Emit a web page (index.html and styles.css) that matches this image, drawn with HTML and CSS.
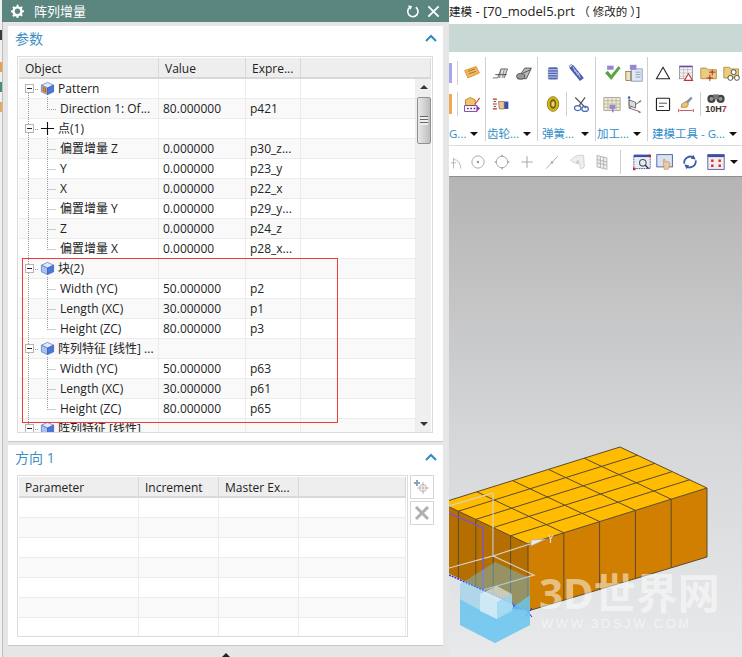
FILE: index.html
```html
<!DOCTYPE html>
<html lang="zh">
<head>
<meta charset="utf-8">
<title>阵列增量</title>
<link rel="stylesheet" href="styles.css">
</head>
<body>
<svg class="defs" width="0" height="0">
  <defs>
    <symbol id="cube" viewBox="0 0 16 16">
      <path d="M1.5 4.5 8 1.5l6.5 3-6.5 3z" fill="#e4ebfa" stroke="#5a78c8" stroke-width=".8"/>
      <path d="M1.5 4.5 8 7.5v7l-6.500-3z" fill="#a9c2f0" stroke="#5a78c8" stroke-width=".8"/>
      <path d="M14.500 4.500 8 7.500v7l6.500-3z" fill="#4a78dc" stroke="#3c5cb0" stroke-width=".8"/>
    </symbol>
  </defs>
</svg>

<div class="behind">
  <span class="bit bit-a"></span><span class="bit bit-b"></span><span class="bit bit-c"></span><span class="bit bit-d"></span>
</div>

<main class="app">
  <header class="app-title"><span class="cjk">建模</span> - [70_model5.prt <span class="cjk">（ 修改的 ）</span>]</header>
  <div class="band"></div>
  <section class="ribbon">
    <div class="group g0">
      <div class="tool-row"><span class="sliver sl-p"></span><span class="sep"></span>
        <svg class="ic" viewBox="0 0 22 22"><path d="M2 8 16 3l4 8-14 6z" fill="#f4b860" stroke="#d98a20"/><path d="M6 9l9-3M7 12l9-3" stroke="#8a6a30"/></svg>
      </div>
      <div class="tool-row"><span class="sliver sl-o"></span><span class="sep"></span>
        <svg class="ic" viewBox="0 0 22 22"><path d="M3 6l6-3 6 3v6l-6 3-6-3z" fill="#f2c46a" stroke="#b07a20"/><path d="M14 11 20 3l1 1-6 8z" fill="#d04a30"/><rect x="2" y="13" width="15" height="7" fill="#fff" stroke="#5a2a90"/><path d="M5 16.500h2M9 16.500h2M13 16.500h2" stroke="#5a2a90" stroke-width="2"/><path d="m17 13 4 3.500-4 3.500z" fill="#a030b0"/></svg>
      </div>
      <div class="label"><span class="label-text">G...</span><i class="caret"></i></div>
    </div>
    <div class="group g1">
      <div class="tool-row">
        <svg class="ic" viewBox="0 0 22 22"><path d="M1 17h6l4-11h8l-4 11" fill="#ddd" stroke="#555"/><path d="M4 13h14" stroke="#333"/><path d="M11 6l-2 11M15 6l-2 11" stroke="#777"/></svg>
        <svg class="ic" viewBox="0 0 22 22"><path d="M3 18 12 5h8l-6 13z" fill="#bbb" stroke="#444"/><ellipse cx="7" cy="15" rx="5" ry="3.500" fill="#999" stroke="#444"/><path d="M10 11l9-4" stroke="#444"/></svg>
      </div>
      <div class="tool-row">
        <svg class="ic" viewBox="0 0 22 22"><path d="M1 5h5M1 11h5M1 17h5" stroke="#b03030" stroke-width="1.500"/><path d="M2 8h3M2 14h3" stroke="#333"/><path d="M8 8h7v9H9z" fill="#e8c59a" stroke="#9a7a50"/><rect x="15" y="8" width="5" height="9" fill="#3a4fa8"/></svg>
      </div>
      <div class="label"><span class="label-text">齿轮...</span><i class="caret"></i></div>
    </div>
    <div class="group g2">
      <div class="tool-row r-gap2">
        <svg class="ic" viewBox="0 0 22 22"><rect x="5" y="4" width="12" height="15" rx="2" fill="#5566b0"/><path d="M4 7h14M4 10h14M4 13h14M4 16h14" stroke="#c8d0ee" stroke-width="1.200"/></svg>
        <svg class="ic" viewBox="0 0 22 22"><path d="M4 3 17 19" stroke="#4a5aae" stroke-width="6"/><path d="M6 3l3 7M9 7l3 7M12 10l3 7" stroke="#c8d4f0" stroke-width="1.200"/><circle cx="4" cy="3" r="2" fill="none" stroke="#4a6ab0"/></svg>
      </div>
      <div class="tool-row">
        <svg class="ic" viewBox="0 0 22 22"><ellipse cx="11" cy="11" rx="7" ry="9" fill="#d4b818" stroke="#8a7410"/><ellipse cx="11" cy="11" rx="4" ry="6" fill="#7a6a10"/><ellipse cx="11" cy="11" rx="2" ry="3.500" fill="#e6d870"/></svg>
        <span class="sep sep-tight"></span>
        <svg class="ic" viewBox="0 0 22 22"><path d="M4 3 17 16M16 3 8 14" stroke="#555" stroke-width="1.500"/><ellipse cx="7" cy="16" rx="4" ry="3" fill="none" stroke="#4a6ab8" stroke-width="1.500"/><ellipse cx="16" cy="17" rx="4" ry="3" fill="none" stroke="#4a6ab8" stroke-width="1.500"/></svg>
      </div>
      <div class="label"><span class="label-text">弹簧...</span><i class="caret"></i></div>
    </div>
    <div class="group g3">
      <div class="tool-row">
        <svg class="ic" viewBox="0 0 22 22"><path d="M5 2h8v5H5z" fill="#9a84d4"/><path d="M3 11l3-2 4 5 9-11 2 2-11 14z" fill="#56a838" stroke="#3a8028" stroke-width=".6"/></svg>
        <svg class="ic" viewBox="0 0 22 22"><rect x="8" y="6" width="13" height="15" fill="#dfe8f4" stroke="#7a92b0"/><path d="M13 10h6M13 13h6M13 16h6" stroke="#7a92b0"/><rect x="1" y="9" width="6" height="11" fill="#f2e2c0" stroke="#887040"/><rect x="6" y="1" width="8" height="6" fill="#9a84d4"/></svg>
      </div>
      <div class="tool-row">
        <svg class="ic" viewBox="0 0 22 22"><path d="M1 3h20v16H1z" fill="#f0ecc8" stroke="#999"/><path d="M1 7h20M1 11h20M1 15h20M6 3v16M11 3v16M16 3v16" stroke="#b0b0a8"/><path d="M8 12h7v5h-7z" fill="#9a84d4"/><path d="M11 17h2v4h-2z" fill="#9a84d4"/></svg>
        <svg class="ic" viewBox="0 0 22 22"><path d="M5 2v14l12 4M5 16l14-8" fill="none" stroke="#555"/><path d="M5 6l8 3v7l-8-3z" fill="#dcdcdc" stroke="#555"/><path d="M3 4l2-3 2 3z" fill="#2a50c8"/><path d="m16 8 4-2-1 3z" fill="#38a038"/><path d="m16 19 4 2-3 1z" fill="#c83030"/></svg>
      </div>
      <div class="label"><span class="label-text">加工...</span><i class="caret"></i></div>
    </div>
    <div class="group g4">
      <div class="tool-row r-gap1">
        <svg class="ic" viewBox="0 0 22 22"><path d="M11 4 19 18H3z" fill="#fff" stroke="#222" stroke-width="1.300"/></svg>
        <svg class="ic" viewBox="0 0 22 22"><rect x="3" y="3" width="16" height="15" fill="#f4f4f4" stroke="#888"/><rect x="3" y="2" width="16" height="2" fill="#6a4ca8"/><path d="M3 7h16M3 11h16M3 15h16M8 4v14M13 4v14" stroke="#c0c0c0"/><path d="M14 12l5 8H9z" fill="#fff" stroke="#c83030" stroke-width="1.300"/></svg>
        <svg class="ic" viewBox="0 0 22 22"><path d="M1 18V5h7l2 2h10v11z" fill="#eacb80" stroke="#a88838"/><path d="M12 13v8M8 17h8M15 7v7M11 10h8" stroke="#a02020"/><circle cx="12" cy="17" r="1.400" fill="#d03030"/><circle cx="15" cy="10" r="1.400" fill="#d03030"/></svg>
        <svg class="ic" viewBox="0 0 22 22"><path d="M1 17V4h7l2 2h9v11z" fill="#eacb80" stroke="#a88838"/><circle cx="13" cy="10" r="3" fill="#fff" stroke="#333"/><circle cx="9" cy="17" r="3" fill="#fff" stroke="#333"/><circle cx="17" cy="17" r="3" fill="#fff" stroke="#333"/></svg>
      </div>
      <div class="tool-row r-gap1">
        <svg class="ic" viewBox="0 0 22 22"><rect x="3" y="4" width="16" height="15" rx="1" fill="#fff" stroke="#222" stroke-width="1.400"/><path d="M6 10h10M6 14h6" stroke="#333"/></svg>
        <svg class="ic" viewBox="0 0 22 22"><path d="M17 2l2 2-6 7-3-2z" fill="#8a8fa8"/><path d="M6 11l5-3 3 3-2 4H5z" fill="#e8c878" stroke="#a88838"/><path d="M2 17v4M20 17v4M3 19h16" stroke="#c83030"/></svg>
        <span class="sep sep-tight"></span>
        <span class="hole-icon">
          <svg class="binoc" viewBox="0 0 22 12"><circle cx="6" cy="7" r="4.500" fill="#444"/><circle cx="16" cy="7" r="4.500" fill="#444"/><rect x="8" y="2" width="6" height="5" fill="#777"/><circle cx="6" cy="7" r="2" fill="#999"/><circle cx="16" cy="7" r="2" fill="#999"/></svg>
          <span class="hole-text">10H<b>7</b></span>
        </span>
      </div>
      <div class="label"><span class="label-text">建模工具 - G...</span><i class="caret"></i></div>
    </div>
  </section>

  <nav class="toolbar">
    <span class="cell w16"><svg class="ic" viewBox="0 0 22 22"><path d="M3 6v13M3 8q8 0 9 11M0 12h6" fill="none" stroke="#aaa"/></svg></span>
    <span class="cell w25"><svg class="ic" viewBox="0 0 22 22"><circle cx="11" cy="11" r="7.500" fill="none" stroke="#aaa" stroke-width="1.200"/><circle cx="11" cy="11" r="1.500" fill="#999"/></svg></span>
    <span class="cell w24"><svg class="ic" viewBox="0 0 22 22"><circle cx="11" cy="11" r="7" fill="none" stroke="#aaa" stroke-width="1.200"/><path d="M11 2v3M11 17v3M2 11h3M17 11h3" stroke="#aaa" stroke-width="2"/></svg></span>
    <span class="cell w26"><svg class="ic" viewBox="0 0 22 22"><path d="M11 4v14M4 11h14" stroke="#aaa" stroke-width="1.300"/></svg></span>
    <span class="cell w24"><svg class="ic" viewBox="0 0 22 22"><path d="M4 19 18 4" stroke="#aaa" stroke-width="1.200"/><circle cx="11" cy="11.500" r="1.500" fill="#aaa"/></svg></span>
    <span class="cell w25"><svg class="ic" viewBox="0 0 22 22"><path d="M3 9q7-8 16-6l1 14q-4 3-5 2 0-6-3-6-4 0-9-4z" fill="#eee" stroke="#ccc"/><circle cx="12" cy="11" r="2" fill="#ccc"/></svg></span>
    <span class="cell w25"><svg class="ic" viewBox="0 0 22 22"><path d="M5 3l12 3v14L5 17z" fill="#f0f0f0" stroke="#aaa"/><path d="M9 4v14M13 5v14M5 8l12 3M5 12l12 3" stroke="#aaa"/></svg></span>
    <span class="sep sep-bar"></span>
    <svg class="ic" viewBox="0 0 22 22"><rect x="1" y="3" width="20" height="16" fill="#e8eef6" stroke="#2a3a9a" stroke-dasharray="2 1"/><rect x="1" y="2" width="20" height="3" fill="#3a4ca8"/><circle cx="12" cy="12" r="4" fill="none" stroke="#555" stroke-width="1.400"/><path d="m15 15 4 4" stroke="#333" stroke-width="1.600"/><rect x="0" y="18" width="3" height="3" fill="#d02020"/><rect x="19" y="2" width="3" height="3" fill="#d02020"/></svg>
    <svg class="ic ic-m1" viewBox="0 0 22 22"><rect x="1" y="2" width="19" height="15" fill="#dbe3f1" stroke="#3a4ca8"/><path d="M9 13V8q1-1 2 0v3q2-1 5 0l1 3-2 6H10z" fill="#eec9a0" stroke="#a87c4c" stroke-width=".6"/></svg>
    <svg class="ic ic-m2" viewBox="0 0 22 22"><path d="M4 13a7.500 7.500 0 0 1 12-7" fill="none" stroke="#3a5ca8" stroke-width="2.200"/><path d="m15 2 3 6-6-1z" fill="#3a5ca8"/><path d="M18 9a7.500 7.500 0 0 1-12 7" fill="none" stroke="#3a5ca8" stroke-width="2.200"/><path d="m7 20-3-6 6 1z" fill="#3a5ca8"/></svg>
    <svg class="ic ic-m3" viewBox="0 0 22 22"><rect x="1" y="2" width="20" height="18" fill="#f4ecec" stroke="#3a4ca8"/><rect x="1" y="2" width="20" height="3" fill="#3a4ca8"/><path d="M5 8h3v3H5zM14 8h3v3h-3zM5 14h3v3H5zM14 14h3v3h-3z" fill="#d83030"/></svg>
    <i class="caret caret-bar"></i>
  </nav>

  <section class="viewport">
    <svg class="model" viewBox="449 178 293 479" width="293" height="479">
      <path d="M441 504 528 545v67l-87-41z" fill="#b56f00"/>
      <path d="M528 545 707 489v69l-179 54z" fill="#d07f00"/>
      <path d="M620 448 707 489 528 545 441 504z" fill="#ffbc00"/>
      <g stroke="#5a4a30" stroke-width="1" fill="none">
        <path d="M620 448 707 489 528 545 441 504z"/>
        <path d="M563.800 533.800 476.800 492.800M599.600 522.600 512.600 481.600M635.400 511.400 548.400 470.400M671.200 500.200 584.200 459.200"/>
        <path d="M510.600 536.800 689.600 480.800M493.200 528.600 672.200 472.600M475.800 520.400 654.800 464.400M458.400 512.200 637.400 456.200"/>
        <path d="M563.800 533.800V601.200M599.600 522.600V590.400M635.400 511.400V579.600M671.200 500.200V568.800M707 489V558M528 545V612M528 612 707 558"/>
        <path d="M458.400 512.200V579.200M475.800 520.400V587.400M493.200 528.600V595.600M510.600 536.800V603.800"/>
      </g>
      <g stroke="#d6d2cc" stroke-width="1.200" fill="none">
        <path d="M449 507 493 494V557M449 569 493 557 534 576 483 591"/>
        <path d="M493 557 533 544"/>
      </g>
      <path d="M449 514 483 529V591" fill="none" stroke="#7b50e0" stroke-width="1.300"/>
      <path d="M449 576 483 591 515 606" fill="none" stroke="#1b22ee" stroke-width="1.300" stroke-dasharray="2 1"/>
      <path d="M531 541 546 540 531 547z" fill="#e8e8e8" stroke="#999" stroke-width=".5"/>
      <path d="M549 536 550.500 540 553 536M550.500 540V544" fill="none" stroke="#ddd" stroke-width="1.200"/>
      <path d="M513 605 525 611 513 610z" fill="#0c28e0"/>
      <path d="M525 609 532 618M532 609 525 618" stroke="#2028d8" stroke-width="1"/>
      <path d="M495 563 530 579V626L495 644 460 626V585Z" fill="#6cc3ee" opacity=".42"/>
      <path d="M460 600V626L495 644 530 626V596L497 620 478 610Q470 606 460 600Z" fill="#6cc5f0" opacity=".8"/>
      <path d="M480 595 497 603V620L480 612Z" fill="#d3ecf8" opacity=".85"/>
      <path d="M512 595 497 603V620L512 612Z" fill="#a6dbf4" opacity=".85"/>
      <path d="M480 595 497 587 512 595 497 603Z" fill="#f2f9fc" opacity=".55"/>
    </svg>
    <div class="mark-text">3D世界网</div>
    <div class="mark-url">WWW.3DSJW.COM</div>
  </section>
</main>

<aside class="dialog">
  <header class="dlg-title">
    <svg class="gear" viewBox="0 0 16 16"><path d="M8 1.500 9.300 1.800 9.700 3.400 11.200 4 12.600 3.200 13.700 4.300 12.900 5.700 13.500 7.200 15 7.600V9l-1.500.4-.6 1.500.8 1.400-1.100 1.100-1.400-.8-1.500.6L9.300 15H7.800l-.4-1.300-1.500-.6-1.400.8-1.100-1.100.8-1.400-.6-1.500L2 9V7.600l1.600-.4.600-1.500-.8-1.400 1.100-1.100 1.400.8 1.500-.6.400-1.600z" fill="#fff"/><circle cx="8.500" cy="8.300" r="2.700" fill="#5b857f"/></svg>
    <span class="dlg-name">阵列增量</span>
    <svg class="dlg-btn" viewBox="0 0 16 16"><path d="M11.500 3.500A5.500 5.500 0 1 1 5 3.700" fill="none" stroke="#fff" stroke-width="1.700"/><path d="M3 1.500 7.500 2 6 6z" fill="#fff"/></svg>
    <svg class="dlg-btn dlg-close" viewBox="0 0 16 16"><path d="M2.500 2.500 13.500 13.500M13.500 2.500 2.500 13.500" stroke="#fff" stroke-width="2"/></svg>
  </header>

  <section class="panel panel-params">
    <div class="panel-head"><span>参数</span><svg class="chev" viewBox="0 0 12 8"><path d="M1 7 6 2l5 5" fill="none" stroke="#2f8ac2" stroke-width="2"/></svg></div>
    <div class="table table-params">
      <div class="row head cols-a"><span class="cell-h">Object</span><span class="cell-h">Value</span><span class="cell-h">Expre...</span><span class="cell-h"></span></div>
      <div class="table-body">
        <div class="tree">
          <div class="row cols-a"><span class="node root"><i class="box"></i><svg class="node-ic" viewBox="0 0 16 16"><use href="#cube"/><path d="M2.500 5.500 7 8v5.500L2.500 11z" fill="#e08a30"/><path d="M3.500 7h1v1h-1zM5.500 8h1v1h-1zM3.500 9.500h1v1h-1zM5.500 10.500h1v1h-1z" fill="#8a3a10"/></svg><span class="name">Pattern</span></span><span></span><span></span><span></span></div>
          <div class="row cols-a"><span class="node leaf">Direction 1: Of...</span><span class="val">80.000000</span><span class="val">p421</span><span></span></div>
          <div class="row cols-a"><span class="node root"><i class="box"></i><svg class="node-ic" viewBox="0 0 16 16"><path d="M8 1v14M1 8h14" stroke="#111" stroke-width="1.200"/></svg><span class="name">点(1)</span></span><span></span><span></span><span></span></div>
          <div class="row cols-a"><span class="node leaf">偏置增量 Z</span><span class="val">0.000000</span><span class="val">p30_z...</span><span></span></div>
          <div class="row cols-a"><span class="node leaf">Y</span><span class="val">0.000000</span><span class="val">p23_y</span><span></span></div>
          <div class="row cols-a"><span class="node leaf">X</span><span class="val">0.000000</span><span class="val">p22_x</span><span></span></div>
          <div class="row cols-a"><span class="node leaf">偏置增量 Y</span><span class="val">0.000000</span><span class="val">p29_y...</span><span></span></div>
          <div class="row cols-a"><span class="node leaf">Z</span><span class="val">0.000000</span><span class="val">p24_z</span><span></span></div>
          <div class="row cols-a"><span class="node leaf">偏置增量 X</span><span class="val">0.000000</span><span class="val">p28_x...</span><span></span></div>
          <div class="row cols-a"><span class="node root"><i class="box"></i><svg class="node-ic" viewBox="0 0 16 16"><use href="#cube"/></svg><span class="name">块(2)</span></span><span></span><span></span><span></span></div>
          <div class="row cols-a"><span class="node leaf">Width (YC)</span><span class="val">50.000000</span><span class="val">p2</span><span></span></div>
          <div class="row cols-a"><span class="node leaf">Length (XC)</span><span class="val">30.000000</span><span class="val">p1</span><span></span></div>
          <div class="row cols-a"><span class="node leaf">Height (ZC)</span><span class="val">80.000000</span><span class="val">p3</span><span></span></div>
          <div class="row cols-a"><span class="node root"><i class="box"></i><svg class="node-ic" viewBox="0 0 16 16"><use href="#cube"/></svg><span class="name">阵列特征 [线性] ...</span></span><span></span><span></span><span></span></div>
          <div class="row cols-a"><span class="node leaf">Width (YC)</span><span class="val">50.000000</span><span class="val">p63</span><span></span></div>
          <div class="row cols-a"><span class="node leaf">Length (XC)</span><span class="val">30.000000</span><span class="val">p61</span><span></span></div>
          <div class="row cols-a"><span class="node leaf">Height (ZC)</span><span class="val">80.000000</span><span class="val">p65</span><span></span></div>
          <div class="row cols-a"><span class="node root"><i class="box"></i><svg class="node-ic" viewBox="0 0 16 16"><use href="#cube"/></svg><span class="name">阵列特征 [线性]</span></span><span></span><span></span><span></span></div>
          <svg class="tree-lines" width="60" height="353" viewBox="0 0 60 353">
            <path d="M9.500 14V353M14 10.500H20M14 50.500H20M14 190.500H20M14 270.500H20M14 350.500H20M28.500 18V30.500H37M28.500 58V170.500M28.500 70.500H37M28.500 90.500H37M28.500 110.500H37M28.500 130.500H37M28.500 150.500H37M28.500 170.500H37M28.500 198V250.500M28.500 210.500H37M28.500 230.500H37M28.500 250.500H37M28.500 278V330.500M28.500 290.500H37M28.500 310.500H37M28.500 330.500H37" fill="none" stroke="#9a9a9a" stroke-dasharray="1 1"/>
          </svg>
        </div>
        <div class="scrollbar">
          <i class="arrow up"></i>
          <div class="thumb"><i class="grip"></i></div>
          <i class="arrow down"></i>
        </div>
      </div>
    </div>
    <div class="red-box"></div>
  </section>

  <section class="panel panel-dir">
    <div class="panel-head"><span>方向 1</span><svg class="chev" viewBox="0 0 12 8"><path d="M1 7 6 2l5 5" fill="none" stroke="#2f8ac2" stroke-width="2"/></svg></div>
    <div class="dir-body">
      <div class="table table-dir">
        <div class="row head cols-b"><span class="cell-h">Parameter</span><span class="cell-h">Increment</span><span class="cell-h">Master Ex...</span><span class="cell-h"></span></div>
        <div class="row cols-b"><span></span><span></span><span></span><span></span></div>
        <div class="row cols-b"><span></span><span></span><span></span><span></span></div>
        <div class="row cols-b"><span></span><span></span><span></span><span></span></div>
        <div class="row cols-b"><span></span><span></span><span></span><span></span></div>
        <div class="row cols-b"><span></span><span></span><span></span><span></span></div>
        <div class="row cols-b"><span></span><span></span><span></span><span></span></div>
        <div class="row cols-b"><span></span><span></span><span></span><span></span></div>
      </div>
      <div class="side-btns">
        <span class="side-btn"><svg viewBox="0 0 18 18" width="18" height="18"><path d="M1 5h6M4 2v6" stroke="#8aa0c4" stroke-width="2"/><circle cx="10" cy="10" r="3.500" fill="none" stroke="#c9a6a6"/><path d="M4 10h12M10 4v12" stroke="#b9b9b9"/></svg></span>
        <span class="side-btn"><svg viewBox="0 0 18 18" width="18" height="18"><path d="M3 3 15 15M15 3 3 15" stroke="#b0b0b0" stroke-width="3"/></svg></span>
      </div>
    </div>
  </section>
  <i class="grab"></i>
</aside>
</body>
</html>
```

FILE: styles.css
```css
* { box-sizing: border-box; }
html, body { margin: 0; padding: 0; }
body {
  width: 742px;
  height: 657px;
  overflow: hidden;
  position: relative;
  background: #fff;
  font-family: "Open Sans", "Noto Sans CJK SC", sans-serif;
  font-size: 12px;
  color: #222;
}
.defs { position: absolute; }

/* strip of the main window visible left of the dialog */
.behind { position: absolute; left: 0; top: 0; width: 2px; height: 657px; background: #f0f0f0; }
.bit { display: block; position: absolute; left: 0; width: 2px; height: 10px; }
.bit-a { top: 62px; background: #e8a050; }
.bit-b { top: 82px; background: #40907c; }
.bit-c { top: 102px; background: #e6a868; }
.bit-d { top: 30px; background: #3a3a3a; }

/* main window */
.app { margin-left: 449px; width: 293px; height: 657px; display: flex; flex-direction: column; }
.app-title {
  height: 24px;
  line-height: 22px;
  font-size: 13px;
  white-space: nowrap;
  color: #222;
}
.cjk { font-size: 11.5px; }
.band { height: 28px; background: #c8d8d5; }
.ribbon { height: 93px; display: flex; background: #fff; padding-top: 5px; }
.group {
  display: flex;
  flex-direction: column;
  height: 84px;
  border-right: 1px solid #d0d0d0;
  flex: none;
}
.g0 { width: 37px; }
.g1 { width: 52px; padding-left: 4px; }
.g2 { width: 58px; padding-left: 4px; }
.g3 { width: 52px; padding-left: 5px; }
.g4 { width: 95px; padding-left: 4px; border-right: 0; }
.tool-row { height: 31px; display: flex; align-items: center; flex: none; }
.g1 .tool-row { gap: 1px; }
.r-gap1 { gap: 1px; }
.r-gap2 { gap: 2px; }
.ic { width: 22px; height: 22px; padding: 2px; flex: none; display: block; }
.sep { width: 1px; height: 24px; background: #cfcfcf; flex: none; margin: 0 3px 0 0; }
.sep-tight { margin: 0 3px 0 2px; }
.sliver { width: 3px; height: 20px; margin-right: 5px; flex: none; }
.sl-p { background: #a8a8e8; }
.sl-o { background: #f0a850; }
.hole-icon { width: 22px; height: 24px; display: flex; flex-direction: column; align-items: center; flex: none; }
.binoc { width: 20px; height: 12px; display: block; }
.hole-text { font: bold 9px/11px "Liberation Sans", sans-serif; color: #333; white-space: nowrap; }
.hole-text b { color: #b03030; }
.label {
  margin-top: 7px;
  height: 16px;
  display: flex;
  align-items: center;
  justify-content: space-between;
  padding-right: 6px;
  font-size: 11.5px;
  color: #2f8ec7;
  white-space: nowrap;
}
.label-text { line-height: 16px; }
.caret { width: 0; height: 0; border: 4px solid transparent; border-top: 4px solid #111; border-bottom: 0; flex: none; }
.g0 .label { padding-right: 7px; }
.g1 .label { margin-left: -3px; }
.g2 .label { padding-right: 6px; }
.g3 .label { margin-left: -4px; }

.toolbar {
  height: 32px;
  display: flex;
  align-items: center;
  background: #fff;
  padding-top: 1px;
  border-top: 1px solid #dcdcdc;
  border-bottom: 1px solid #8f8f8f;
  flex: none;
}
.cell { display: flex; justify-content: center; flex: none; overflow: hidden; }
.w16 { width: 16px; justify-content: flex-start; }
.w24 { width: 24px; }
.w25 { width: 25px; }
.w26 { width: 26px; }
.sep-bar { margin: 0 10px 0 6px; }
.ic-m1 { margin-left: 1px; }
.ic-m2 { margin-left: 3px; }
.ic-m3 { margin-left: 4px; }
.caret-bar { margin-left: 3px; }

.viewport {
  flex: 1;
  position: relative;
  overflow: hidden;
  background: linear-gradient(#b4b4b4, #d6d7d9 55%, #e8e9eb);
}
.model { display: block; position: absolute; left: 0; top: 0; }
.mark-text {
  position: absolute;
  left: 90px;
  top: 393px;
  font: bold 42px/46px "Noto Sans", "Noto Sans CJK SC", sans-serif;
  color: rgba(255, 255, 255, .52);
  white-space: nowrap;
}
.mark-url {
  position: absolute;
  left: 92px;
  top: 439px;
  font: 13px/16px "Liberation Sans", sans-serif;
  letter-spacing: 2.600px;
  color: rgba(255, 255, 255, .55);
  white-space: nowrap;
}

/* dialog window */
.dialog {
  position: absolute;
  left: 2px;
  top: 0;
  width: 447px;
  height: 657px;
  background: #e6e6e6;
  border-left: 1px solid #bdbdbd;
}
.dlg-title {
  height: 22px;
  background: #5b857f;
  display: flex;
  align-items: center;
  padding: 0 8px 0 7px;
  margin-left: -1px;
  color: #fff;
}
.gear { width: 16px; height: 16px; flex: none; }
.dlg-name { margin-left: 9px; font-size: 13px; line-height: 22px; flex: 1; }
.dlg-btn { width: 15px; height: 15px; flex: none; }
.dlg-close { margin-left: 6px; }

.panel {
  position: absolute;
  left: 5px;
  width: 435px;
  background: #fff;
  box-shadow: 0 1px 0 #c8c8c8;
}
.panel-params { top: 26px; height: 415px; }
.panel-dir { top: 445px; height: 200px; }
.panel-head {
  height: 30px;
  display: flex;
  align-items: center;
  justify-content: space-between;
  padding: 0 6px 6px 7px;
  font-size: 14px;
  color: #3d8fc4;
}
.chev { width: 12px; height: 8px; }
.table { border: 1px solid #dcdcdc; padding: 1px 1px 0; background: #fff; }
.table-params { margin-left: 9px; width: 416px; height: 377px; overflow: hidden; }
.row { display: grid; height: 20px; border-bottom: 1px solid #ececec; background: #fff; line-height: 19px; }
.row > * { border-right: 1px solid #ececec; white-space: nowrap; overflow: hidden; }
.tree .row:nth-child(even), .table-dir .row:nth-child(odd):not(.head) { background: #f9f9f9; }
.cols-a { grid-template-columns: 140px 87px 55px 1fr; }
.cols-b { grid-template-columns: 120px 80px 80px 107px; }
.head { background: #eeeeee; border-bottom: 2px solid #d8d8d8; height: 21px; line-height: 20px; }
.cell-h { padding-left: 6px; padding-top: 1px; border-right-color: #d8d8d8 !important; }
.table-body { display: flex; height: 353px; overflow: hidden; }
.tree { position: relative; width: 397px; flex: none; height: 353px; overflow: hidden; }
.tree-lines { position: absolute; left: 0; top: 0; pointer-events: none; }
.node { display: block; }
.root { display: flex; align-items: center; padding-left: 6px; position: relative; }
.box {
  position: relative;
  z-index: 1;
  width: 9px;
  height: 9px;
  flex: none;
  border: 1px solid #b5b5b5;
  background: linear-gradient(90deg, transparent 1px, #222 1px, #222 6px, transparent 6px) center / 100% 1px no-repeat, #fff;
}
.node-ic { width: 15px; height: 15px; margin-left: 6px; flex: none; }
.name { margin-left: 3px; overflow: hidden; }
.leaf { padding-left: 41px; }
.val { padding-left: 4px; }
.scrollbar {
  width: 16px;
  flex: none;
  background: #efefef;
  position: relative;
}
.arrow { position: absolute; left: 4px; width: 0; height: 0; border: 4px solid transparent; }
.arrow.up { top: 6px; border-bottom: 4px solid #333; border-top: 0; }
.arrow.down { bottom: 6px; border-top: 4px solid #333; border-bottom: 0; }
.thumb {
  position: absolute;
  top: 18px;
  left: 1px;
  width: 14px;
  height: 47px;
  border: 1px solid #909090;
  border-radius: 2px;
  background: linear-gradient(90deg, #e8e8e8, #cfcfcf 60%, #bcbcbc);
  display: flex;
  align-items: center;
  justify-content: center;
}
.grip {
  width: 8px;
  height: 9px;
  background: repeating-linear-gradient(#666 0, #666 1px, #eee 1px, #eee 3px);
}
.red-box {
  position: absolute;
  left: 14px;
  top: 232px;
  width: 316px;
  height: 165px;
  border: 1px solid #f23a3a;
}

.dir-body { display: flex; align-items: flex-start; gap: 2px; margin-left: 9px; }
.table-dir { width: 391px; height: 162px; overflow: hidden; }
.side-btns { display: flex; flex-direction: column; gap: 2px; }
.side-btn {
  width: 24px;
  height: 24px;
  border: 1px solid #d6d6d6;
  display: flex;
  align-items: center;
  justify-content: center;
}
.grab {
  position: absolute;
  left: 219px;
  top: 653px;
  width: 0;
  height: 0;
  border: 4px solid transparent;
  border-bottom: 4px solid #222;
  border-top: 0;
}
```
